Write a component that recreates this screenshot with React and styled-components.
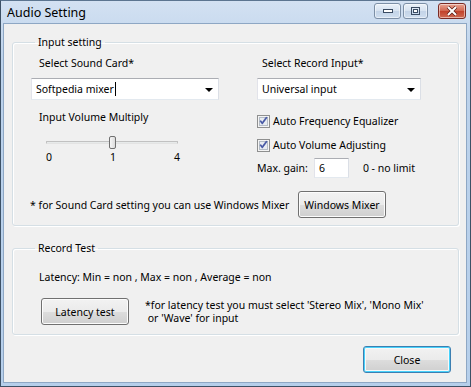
import styled, { createGlobalStyle } from "styled-components"

const Global = createGlobalStyle`
    html, body {
        margin: 0;
        padding: 0;
        background: #ffffff;
    }
    * {
        box-sizing: border-box;
    }
`

const Window = styled.div`
    width: 471px;
    height: 387px;
    display: flex;
    flex-direction: column;
    background: linear-gradient(#d3e1f2, #bcd2eb 60px, #b6cfeb);
    border: 1px solid #3d5166;
    border-top-color: #5c7590;
    font-family: "Noto Sans", "Open Sans", sans-serif;
    font-size: 10.5px;
    color: #000;
`

const TitleBar = styled.div`
    height: 22px;
    display: flex;
    align-items: center;
    padding-left: 6px;
    padding-right: 4px;
`

const Title = styled.div`
    flex: 1;
    font-size: 12.5px;
    color: #000;
`

const CaptionButtons = styled.div`
    display: flex;
    align-items: center;
    gap: 2px;
    margin-top: -2px;
`

const CaptionButton = styled.div`
    width: ${p => p.$w}px;
    height: 16px;
    margin-left: ${p => p.$gap || 0}px;
    border: 1px solid ${p => (p.$close ? "#7a2b25" : "#7c8fa6")};
    border-radius: 3px;
    display: flex;
    align-items: center;
    justify-content: center;
    background: ${p =>
        p.$close
            ? "linear-gradient(#e8a493, #d0654f 50%, #c1412b 51%, #cf6a52)"
            : "linear-gradient(#eaf1f9, #d6e2f0 50%, #c3d3e7 51%, #cfdeef)"};
    box-shadow: inset 0 0 0 1px rgba(255, 255, 255, 0.5);
`

const Body = styled.div`
    flex: 1;
    margin: 0 3px 3px 2px;
    background: #f0f0f0;
    border: 1px solid #8ea7c4;
    padding: 11px 7px 0 8px;
    display: flex;
    flex-direction: column;
`

const Group = styled.fieldset`
    margin: ${p => p.$top || 0}px 0 0;
    border: 1px solid #d5dfe5;
    border-radius: 3px;
    box-shadow: inset 1px 1px 0 #ffffff, 1px 1px 0 #ffffff;
    padding: 0 0 ${p => p.$bottom}px 18px;
    min-width: 0;
`

const Legend = styled.legend`
    padding: 0 3px;
    margin-left: 4px;
    line-height: 14px;
`

const Columns = styled.div`
    display: grid;
    grid-template-columns: 226px 1fr;
    margin-top: 7px;
`

const Column = styled.div`
    display: flex;
    flex-direction: column;
`

const Label = styled.div`
    line-height: 14px;
    margin-left: ${p => p.$indent || 0}px;
    margin-top: ${p => p.$top || 0}px;
    white-space: nowrap;
`

const Combo = styled.div`
    width: ${p => p.$w}px;
    height: 22px;
    margin-top: 8px;
    background: #ffffff;
    border: 1px solid #abadb3;
    border-color: #abadb3 #dbdfe6 #e3e9ef #e2e3ea;
    display: flex;
    align-items: center;
    padding: 0 5px 0 4px;
`

const ComboText = styled.div`
    flex: 1;
    line-height: 14px;
    display: flex;
    align-items: center;
`

const Caret = styled.span`
    display: inline-block;
    width: 1px;
    height: 14px;
    background: #000;
    margin-left: 1px;
`

const Arrow = styled.span`
    width: 0;
    height: 0;
    border-left: 4px solid transparent;
    border-right: 4px solid transparent;
    border-top: 4px solid #000;
    margin-top: 1px;
`

const SliderBox = styled.div`
    position: relative;
    width: 132px;
    height: 13px;
    margin: 12px 0 0 15px;
    display: flex;
    align-items: center;
`

const Track = styled.div`
    width: 100%;
    height: 3px;
    background: #e7eaea;
    border: 1px solid #c1c1c1;
    border-bottom-color: #e3e3e3;
    border-radius: 1px;
`

const Thumb = styled.div`
    position: absolute;
    left: 63px;
    top: 0;
    width: 7px;
    height: 13px;
    border: 1px solid #707070;
    border-radius: 2px;
    background: linear-gradient(90deg, #f6f6f6, #dcdcdc);
`

const Ticks = styled.div`
    width: 134px;
    margin: 1px 0 0 15px;
    display: flex;
    justify-content: space-between;
    line-height: 14px;
`

const CheckRow = styled.div`
    display: flex;
    align-items: center;
    gap: 3px;
    height: 16px;
    margin-top: ${p => p.$top}px;
`

const GainRow = styled.div`
    display: flex;
    align-items: center;
    margin-top: 5px;
    height: 20px;
`

const GainInput = styled.div`
    width: 35px;
    height: 20px;
    margin: 0 14px 0 6px;
    background: #ffffff;
    border: 1px solid #abadb3;
    border-color: #abadb3 #dbdfe6 #e3e9ef #e2e3ea;
    padding-left: 4px;
    line-height: 18px;
`

const Footer = styled.div`
    display: flex;
    align-items: center;
    margin-top: 13px;
`

const Note = styled.div`
    width: 268px;
    margin-left: -1px;
    white-space: nowrap;
`

const Button = styled.div`
    width: 88px;
    height: 27px;
    display: flex;
    align-items: center;
    justify-content: center;
    border: 1px solid ${p => (p.$default ? "#3c7fb1" : "#707070")};
    border-radius: 3px;
    background: linear-gradient(#f2f2f2, #ebebeb 50%, #dddddd 51%, #cfcfcf);
    box-shadow: ${p =>
        p.$default
            ? "inset 0 0 0 1px #48d2fb, inset 0 0 0 2px #f8f8f8"
            : "inset 0 0 0 1px #fcfcfc"};
`

const Latency = styled.div`
    margin: 15px 0 0 8px;
    line-height: 14px;
`

const TestRow = styled.div`
    display: flex;
    align-items: flex-start;
    margin: 14px 0 0 10px;
`

const TestNote = styled.div`
    margin: 0 0 0 16px;
    line-height: 13px;
    padding-top: 1px;
    white-space: pre;
`

const BottomBar = styled.div`
    display: flex;
    justify-content: flex-end;
    padding-right: 8px;
    margin-top: 11px;
`

const CheckBox = () => (
    <svg width="13" height="13" viewBox="0 0 13 13">
        <rect x="0.5" y="0.5" width="12" height="12" fill="#f4f4f4" stroke="#8e8f8f" />
        <rect x="2.5" y="2.5" width="8" height="8" fill="#e8ecf1" stroke="#b4bcc6" />
        <path d="M3 6.2 L5.3 9.2 L10.2 2.6 L9 2.2 L5.2 7.4 L4 5.6 Z" fill="#3c4fa0" stroke="#3c4fa0" strokeWidth="0.6" />
    </svg>
)

const App = () => {
    return (
        <>
            <Global />
            <Window>
                <TitleBar>
                    <Title>Audio Setting</Title>
                    <CaptionButtons>
                        <CaptionButton $w={27}>
                            <svg width="10" height="5" viewBox="0 0 10 5">
                                <rect x="0.5" y="0.5" width="9" height="3" fill="#fff" stroke="#3a4b62" />
                            </svg>
                        </CaptionButton>
                        <CaptionButton $w={25}>
                            <svg width="9" height="8" viewBox="0 0 9 8">
                                <rect x="0.5" y="0.5" width="8" height="7" fill="none" stroke="#3a4b62" />
                                <rect x="2.5" y="2.5" width="4" height="3" fill="#fff" stroke="#3a4b62" />
                            </svg>
                        </CaptionButton>
                        <CaptionButton $w={28} $close $gap={8}>
                            <svg width="12" height="10" viewBox="0 0 12 10">
                                <path d="M2 1 L10 9 M10 1 L2 9" stroke="#5a1d16" strokeWidth="3.4" />
                                <path d="M2 1 L10 9 M10 1 L2 9" stroke="#fff" strokeWidth="2" />
                            </svg>
                        </CaptionButton>
                    </CaptionButtons>
                </TitleBar>
                <Body>
                    <Group $bottom={7}>
                        <Legend>Input setting</Legend>
                        <Columns>
                            <Column>
                                <Label $indent={8}>Select Sound Card*</Label>
                                <Combo $w={188}>
                                    <ComboText>
                                        Softpedia mixer<Caret />
                                    </ComboText>
                                    <Arrow />
                                </Combo>
                                <Label $indent={8} $top={10}>Input Volume Multiply</Label>
                                <SliderBox>
                                    <Track />
                                    <Thumb />
                                </SliderBox>
                                <Ticks>
                                    <span>0</span>
                                    <span>1</span>
                                    <span>4</span>
                                </Ticks>
                            </Column>
                            <Column>
                                <Label $indent={5}>Select Record Input*</Label>
                                <Combo $w={164}>
                                    <ComboText>Universal input</ComboText>
                                    <Arrow />
                                </Combo>
                                <CheckRow $top={13}>
                                    <CheckBox />
                                    <span>Auto Frequency Equalizer</span>
                                </CheckRow>
                                <CheckRow $top={8}>
                                    <CheckBox />
                                    <span>Auto Volume Adjusting</span>
                                </CheckRow>
                                <GainRow>
                                    <span>Max. gain:</span>
                                    <GainInput>6</GainInput>
                                    <span>0 - no limit</span>
                                </GainRow>
                            </Column>
                        </Columns>
                        <Footer>
                            <Note>* for Sound Card setting you can use Windows Mixer</Note>
                            <Button>Windows Mixer</Button>
                        </Footer>
                    </Group>
                    <Group $bottom={9} $top={15}>
                        <Legend>Record Test</Legend>
                        <Latency>Latency: Min = non , Max = non , Average = non</Latency>
                        <TestRow>
                            <Button>Latency test</Button>
                            <TestNote>{"*for latency test you must select 'Stereo Mix', 'Mono Mix'\n or 'Wave' for input"}</TestNote>
                        </TestRow>
                    </Group>
                    <BottomBar>
                        <Button $default>Close</Button>
                    </BottomBar>
                </Body>
            </Window>
        </>
    )
}

export default App
